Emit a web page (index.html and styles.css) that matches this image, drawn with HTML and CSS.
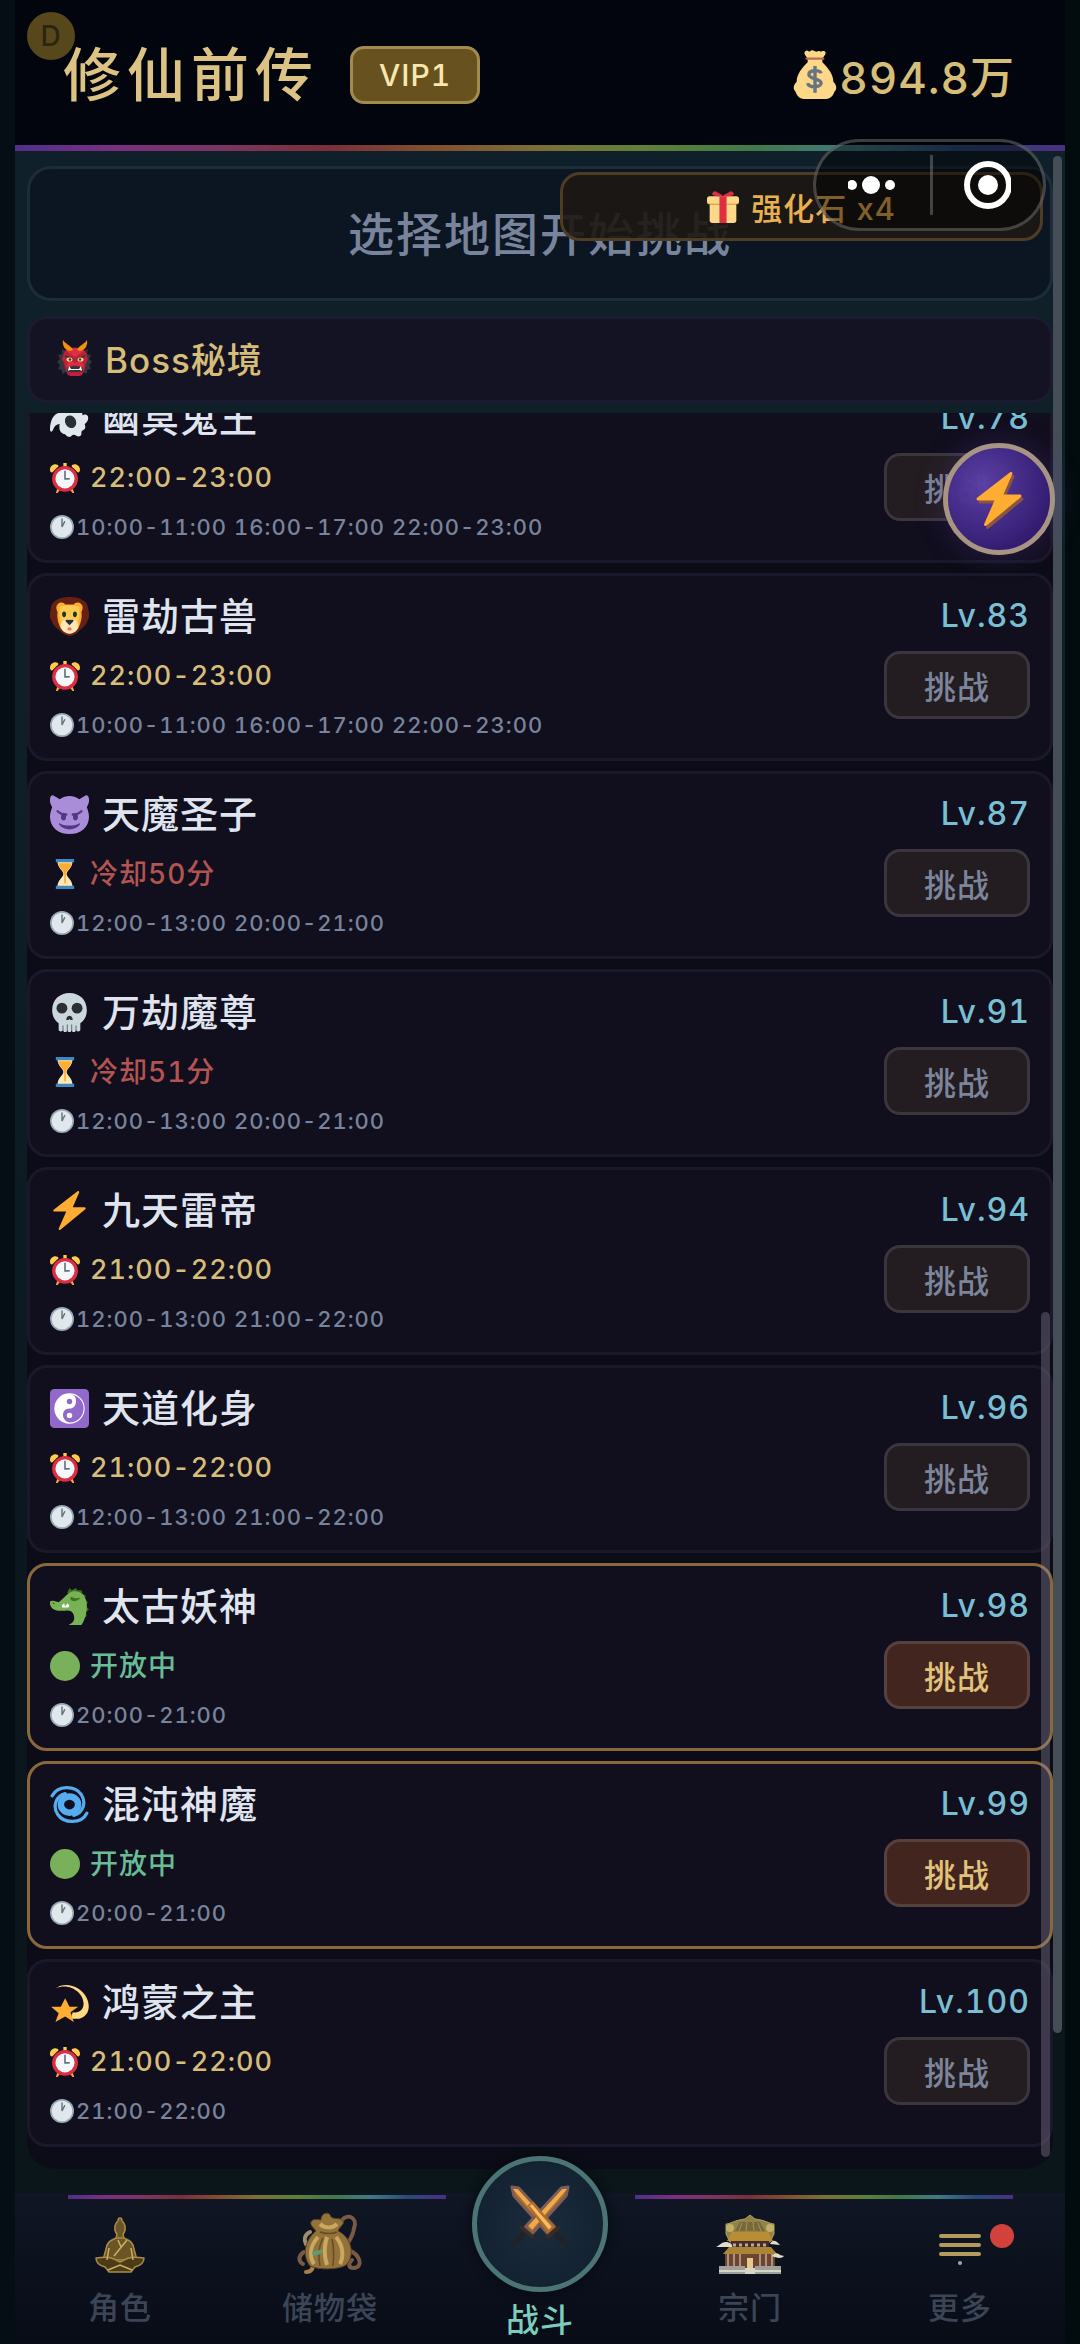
FILE: index.html
```html
<!DOCTYPE html>
<html lang="zh-CN">

<head>
    <meta charset="UTF-8">
    <meta name="viewport" content="width=device-width, initial-scale=1.0">
    <title>修仙前传</title>
    <link rel="stylesheet" href="styles.css">
</head>

<body>
    <!-- 图标 -->
    <svg class="sprite" aria-hidden="true">
        <symbol id="i-oni" viewBox="0 0 36 36">
            <path fill="#31373d" d="M5 9l4 2 2-4 3 3 4-3 4 3 3-3 2 4 4-2-1 5 4 1-2 4 3 3-3 3 2 4-4 1 0 4-4-2H9l-4 2 0-4-4-1 2-4-3-3 3-3-2-4 4-1z" />
            <path fill="#be2038" d="M7 13c2-7 20-7 22 0l2 6-2 4c-1 5-2 9-4 12-3 2-11 2-14 0-2-3-3-7-4-12l-2-4z" />
            <path fill="#dd2e44" d="M9 11c3-4 15-4 18 0l-9 6zM12 20l6 3 6-3 3 7-9-2-9 2z" />
            <path fill="#f4900c" d="M13 11C8 10 5 6 6 0c2 4 8 5 10 10zM23 11c5-1 8-5 7-11-2 4-8 5-10 10z" />
            <path fill="#31373d" d="M8 15l9 4-1 1-8-3zM28 15l-9 4 1 1 8-3z" />
            <ellipse cx="12.500" cy="19.500" rx="3" ry="2" fill="#ffd983" />
            <ellipse cx="23.500" cy="19.500" rx="3" ry="2" fill="#ffd983" />
            <circle cx="13" cy="19.500" r="1.300" fill="#31373d" />
            <circle cx="23" cy="19.500" r="1.300" fill="#31373d" />
            <path fill="#31373d" d="M11 27c4-1 10-1 14 0l1 5H10z" />
            <path fill="#fff" d="M11 31l1-5 2 3h8l2-3 1 5-2-1H13z" />
        </symbol>
        <symbol id="i-ghost" viewBox="0 0 36 36">
            <path fill="#e1e8ed" d="M35 16c-1-2-3-2-5-1C29 6 25 0 18 0S8 5 8 13c-4 1-8 6-8 15 0 3 2 3 3 0 1-3 3-5 6-5-1 4 0 8 3 9 3 0 3 3 6 3 2 0 2-2 4-2s4 3 6 1c2-1 0-4 2-5 3-1 3-3 2-6 2-1 4-4 3-7z" />
            <circle cx="14" cy="10" r="3" fill="#292f33" />
            <circle cx="23" cy="10" r="3" fill="#292f33" />
            <ellipse cx="19" cy="21" rx="5" ry="6" fill="#292f33" transform="rotate(-30 19 21)" />
        </symbol>
        <symbol id="i-lion" viewBox="0 0 36 36">
            <path fill="#662113" d="M18 0c5 0 10 1 12 3 3 1 5 4 5 7 1 4 2 8 0 11-1 4-4 7-7 9-3 4-7 6-10 6s-7-2-10-6c-3-2-6-5-7-9-2-3-1-7 0-11 0-3 2-6 5-7 2-2 7-3 12-3z" />
            <path fill="#ffac33" d="M7 7c2-3 6-2 7 0h8c1-2 5-3 7 0 2 2 1 5 0 7 1 5-1 11-3 15-4 5-12 5-16 0C8 25 6 19 7 14c-1-2-2-5 0-7z" />
            <path fill="#ffcc4d" d="M9 9c3-2 15-2 18 0 1 7 0 13-3 18H12C9 22 8 16 9 9z" />
            <path fill="#ffe8b6" d="M18 20c5 0 9 3 8 8-1 4-5 6-8 6s-7-2-8-6c-1-5 3-8 8-8z" />
            <ellipse cx="13" cy="16" rx="1.800" ry="2.600" fill="#292f33" />
            <ellipse cx="23" cy="16" rx="1.800" ry="2.600" fill="#292f33" />
            <path fill="#292f33" d="M15 21h6c1 0 1 1 0 2l-3 3-3-3c-1-1-1-2 0-2z" />
            <ellipse cx="18" cy="29.500" rx="2" ry="1.500" fill="#e6707c" />
        </symbol>
        <symbol id="i-imp" viewBox="0 0 36 36">
            <path fill="#aa8dd8" d="M35 1c-1-1-2-1-3 0l-5 3C24 2 21 1 18 1s-6 1-9 3L4 1C3 0 2 0 1 1c-2 3-1 7 1 10-1 3-2 6-2 9 0 10 8 16 18 16s18-6 18-16c0-3-1-6-2-9 2-3 3-7 1-10z" />
            <path fill="none" stroke="#553788" stroke-width="2.200" stroke-linecap="round" d="M7 15c2 2 5 3 8 3M29 15c-2 2-5 3-8 3" />
            <ellipse cx="12.500" cy="20" rx="2.300" ry="3.500" fill="#553788" />
            <ellipse cx="23.500" cy="20" rx="2.300" ry="3.500" fill="#553788" />
            <path fill="#553788" d="M9 26c3 3 15 3 18 0 1 0 1 1 0 2-4 5-14 5-18 0-1-1-1-2 0-2z" />
        </symbol>
        <symbol id="i-skull" viewBox="0 0 36 36">
            <path fill="#ccd6dd" d="M34 16C34 6 27 0 18 0S2 6 2 16c0 5 2 9 6 12v6c0 2 4 2 4 0 0 3 4 3 4 0 0 3 4 3 4 0 0 3 4 3 4 0 0 2 4 2 4 0v-6c4-3 6-7 6-12z" />
            <circle cx="11" cy="14" r="5" fill="#292f33" />
            <circle cx="25" cy="14" r="5" fill="#292f33" />
            <path fill="#292f33" d="M18 21c2 0 3 2 3 4h-2l-1-1-1 1h-2c0-2 1-4 3-4z" />
            <path stroke="#66757f" d="M12 30v5M16 29v6M20 29v6M24 30v5" />
        </symbol>
        <symbol id="i-bolt" viewBox="0 0 36 36">
            <path fill="#ffac33" d="M32.900 15.600c-.1-.4-.5-.6-.9-.6H21L26.900 1.400c.4-1-.6-1.800-1.500-1.200l-22 17c-.8.700-.4 1.800.6 1.800h11L8.100 34.600c-.4 1 .6 1.800 1.500 1.200l23-19c.3-.3.500-.8.300-1.200z" />
        </symbol>
        <symbol id="i-yinyang" viewBox="0 0 36 36">
            <rect width="36" height="36" rx="4" fill="#9268ca" />
            <circle cx="18" cy="18" r="14" fill="#fff" />
            <path fill="#9268ca" d="M18 5a13 13 0 0 1 0 26c-4-1-6-4-6-7s2-6 6-6 6-3 6-7-2-6-6-6z" />
            <circle cx="18" cy="11.500" r="2.500" fill="#9268ca" />
            <circle cx="18" cy="24.500" r="2.500" fill="#fff" />
        </symbol>
        <symbol id="i-dragon" viewBox="0 0 36 36">
            <path fill="#3e721d" d="M16 5l2-4 2 2 4-2 1 2 4 0 1 3 3 2-1 3 3 3-2 3 3 4-3 2 1 4-4 2z" />
            <path fill="#77b255" d="M0 16c-1-3 1-4 4-3l4 1c5-3 7-8 13-10 8-1 13 5 13 13 0 7-2 14-5 18H17c5-2 6-5 5-9-1-4-5-5-8-4l-5 0c-5 0-8-2-9-6z" />
            <path fill="#3e721d" d="M19 9c3 1 5 2 9 1-2 3-6 4-9 2zM2 14l3 1-2 1z" />
            <path fill="#fff" d="M11 17l2-2 1 3 2-3 2 2-1 2-6 0z" />
        </symbol>
        <symbol id="i-cyclone" viewBox="0 0 36 36">
            <g fill="none" stroke="#55acee" stroke-linecap="round">
                <path stroke-width="3" d="M2 10C7 0 23 0 29 9c5 8 1 17-7 19" />
                <path stroke-width="3" d="M34 26c-5 10-21 10-27 1C2 19 6 10 14 8" />
                <ellipse cx="18" cy="18" rx="8" ry="7.500" stroke-width="6" />
            </g>
        </symbol>
        <symbol id="i-dizzy" viewBox="0 0 36 36">
            <path fill="#ffd983" d="M5 5C14-2 29 3 34 14c4 9 1 17-7 19l-8 0 2-6c6 1 10-2 10-8C31 9 18-1 5 5z" />
            <path fill="#ffac33" d="M14 14l4 8h8l-7 5 3 9-8-5-9 5 3-8-7-6 9 0z" />
        </symbol>
        <symbol id="i-alarm" viewBox="0 0 36 36">
            <path fill="#ffcc4d" d="M0 8c0-5 5-8 9-6 2 1 1 3-1 4L3 11C1 12 0 10 0 8zM36 8c0-5-5-8-9-6-2 1-1 3 1 4l5 5c2 1 3-1 3-3zM16 0h4v5h-4z" />
            <path fill="#ffac33" d="M9 30l3 2-3 4-2 0zM27 30l-3 2 3 4 2 0z" />
            <circle cx="18" cy="19" r="15.500" fill="#dd2e44" />
            <circle cx="18" cy="19" r="11.500" fill="#f5f8fa" />
            <path fill="none" stroke="#66757f" stroke-width="2" stroke-linecap="round" d="M18 10v9h5" />
        </symbol>
        <symbol id="i-hourglass" viewBox="0 0 36 36">
            <path fill="#ffe8b6" d="M9 3h18c0 8-7 11-7 15s7 7 7 15H9c0-8 7-11 7-15S9 11 9 3z" />
            <path fill="#ffac33" d="M10 5h16c-1 7-7 9-7 13l0 11h-2V18c0-4-6-6-7-13z" />
            <path fill="#3b88c3" d="M7 0h22v4H7zM7 32h22v4H7z" />
        </symbol>
        <symbol id="i-clock" viewBox="0 0 36 36">
            <circle cx="18" cy="18" r="18" fill="#99aab5" />
            <circle cx="18" cy="18" r="15.500" fill="#e1e8ed" />
            <path fill="none" stroke="#66757f" stroke-width="2.200" stroke-linecap="round" d="M18 6v12l4-8" />
        </symbol>
        <symbol id="i-open" viewBox="0 0 36 36">
            <circle cx="18" cy="18" r="18" fill="#78b159" />
        </symbol>
        <symbol id="i-money" viewBox="0 0 36 40">
            <path fill="#fdd888" d="M10 1c2-2 3 1 4 0s2-1 4 0 3-1 4 0 2-1 4 0c2 2-1 4-2 6v3c5 5 9 10 9 16 3 3 3 6 1 8-1 3-3 6-7 6H9c-4 0-6-3-7-6-2-2-2-5 1-8 0-6 4-11 9-16V7c-1-2-4-4-2-6z" />
            <path fill="#bf6952" d="M11 6h14c1 0 1 2 0 2H11c-1 0-1-2 0-2z" />
            <path fill="none" stroke="#67757f" stroke-width="2.800" d="M23 19c-1-3-10-3-10 1s10 3 10 7-10 4-11 0M18 13v22" />
        </symbol>
        <symbol id="i-gift" viewBox="0 0 36 36">
            <path fill="#fdd888" d="M3 15h30v18c0 2-1 3-3 3H6c-2 0-3-1-3-3z" />
            <rect y="7" width="36" height="8" rx="3" fill="#fcab40" />
            <rect y="6" width="36" height="8" rx="3" fill="#fdd888" />
            <path fill="#dd2e44" d="M14 6h8v30h-8z" />
            <path fill="#dd2e44" d="M17 6C13 6 7 6 6 4s3-5 5-3 6 2 7 5zM19 6c4 0 10 0 11-2s-3-5-5-3-6 2-7 5z" />
        </symbol>
        <symbol id="i-monk" viewBox="0 0 64 64">
            <g fill="#6b5425" stroke="#a88c48" stroke-width="1.500" stroke-linejoin="round">
                <path d="M30 9c0-4 4-4 4 0 4 3 4 10 1 13l1 5h-8l1-5c-3-3-3-10 1-13z" />
                <path d="M28 26h8c7 3 9 5 10 11l3 11H15l3-11c1-6 3-8 10-11z" />
                <path fill="#4c3b17" d="M8 46c6-1 13-2 18 1l6 3 6-3c5-3 12-2 18-1 0 6-5 8-9 9l-4 5H21l-4-5c-4-1-9-3-9-9z" />
            </g>
            <path fill="none" stroke="#cdb062" stroke-width="1.500" d="M39 28L26 44M30 28l3 7M21 36l-2 12M43 36l2 12M20 58l12-5 12 5" />
        </symbol>
        <symbol id="i-bag" viewBox="0 0 64 64">
            <g fill="none" stroke="#7b5a45" stroke-width="4" stroke-linecap="round">
                <path d="M44 8c6-7 16-2 12 8-1 10-7 14-8 20" />
                <path d="M50 38c12 4 16 17 6 18-6 0-6-5-2-8" />
                <path stroke="#a08d6c" d="M12 20c-6 3-6 8-4 12" />
                <path d="M6 40c-6 4-6 9-1 12" />
                <path stroke="#a5804a" d="M14 50c3 6-1 10-6 10" />
            </g>
            <path fill="#94733a" stroke="#594226" d="M23 8c0-8 9-9 10-3 4 3 9 0 12 4 2 3-4 6-5 10 13 6 18 24 8 34-8 5-28 5-36 1-9-12-4-27 6-35-3-4-6-6-5-9s6-3 10-2z" />
            <path fill="none" stroke="#c9a860" stroke-width="4" d="M22 12c4 4 12 5 17 0M20 25c-8 9-9 19-4 27M29 25c-3 9-3 19 0 28M38 25c7 8 8 19 4 27" />
            <path fill="none" stroke="#654b28" stroke-width="1.500" d="M22 20c5 2 13 2 17 0M25 26c-5 9-5 18-3 28M34 27c2 9 2 18 1 27" />
            <path fill="#5d9c76" d="M14 40l11-3-2 5-8 2z" />
        </symbol>
        <symbol id="i-temple" viewBox="0 0 68 60">
            <path fill="#948349" stroke="#b3a25d" d="M34 1l5 4c10 1 15 5 19 5l0 10-4 8H14l-4-8V10c4 0 9-4 19-5z" />
            <path fill="#766a3c" d="M24 8h20l5 9H19z" />
            <path stroke="#a39457" d="M26 9l-3 8M31 8l-1 9M37 8l1 9M42 9l3 8" />
            <circle cx="14" cy="14" r="4" fill="#c2b069" />
            <circle cx="54" cy="14" r="4" fill="#c2b069" />
            <path fill="#b98d33" d="M16 18h36l5 9H11z" />
            <path fill="#432d2b" d="M15 27h38v7H15z" />
            <path stroke="#c3a69a" stroke-width="3" stroke-dasharray="3 3" d="M17 31h34" />
            <path fill="#a98534" d="M13 33h42l6 7H7z" />
            <path fill="#6d4434" d="M9 40h50v14H9z" />
            <path stroke="#ad9377" stroke-width="2" d="M12 40v14M18 40v14M24 40v14M44 40v14M50 40v14M56 40v14" />
            <path fill="#e7c98c" d="M31 44h6v10h-6z" />
            <path fill="#9ea19b" d="M3 52h26v8H3zM39 52h26v8H39z" />
            <path fill="#d8d5c2" d="M29 54h10v6H29zM3 56h62v2H3z" />
            <path fill="#e2dccd" d="M0 33c4-2 6-5 10-5s7 3 6 5zM54 30c2-4 5-4 8-1l2 2zM56 42c3-4 6-3 8-1l4 1c-2 3-8 2-12 0z" />
        </symbol>
        <symbol id="i-more" viewBox="0 0 64 64">
            <path stroke="#b39a5d" stroke-width="4" stroke-linecap="round" d="M13 24h38M13 33h38M13 42h38" />
            <circle cx="32" cy="51" r="2" fill="#aaa69a" />
        </symbol>
        <symbol id="i-swords" viewBox="0 0 64 66">
            <g id="blade">
                <path stroke="#7d5d58" stroke-width="3" stroke-linejoin="round" fill="#b06c2b" d="M3 2l7 1 37 40-7 7L5 11z" />
                <path fill="#f0aa4a" d="M4 4l5 0 35 38-4 4z" />
                <path stroke="#202225" stroke-width="5" stroke-linecap="round" d="M49 51l11 11" />
                <path stroke="#3a2a20" stroke-width="4" stroke-linecap="round" d="M40 53l11-9" />
            </g>
            <use href="#blade" transform="matrix(-1 0 0 1 64 0)" />
            <path fill="#b06c2b" d="M19 21l6-4 22 26-7 7z" />
            <path fill="#f7bc62" d="M21 21l3-1 20 23-3 3z" />
        </symbol>
    </svg>

    <div class="app">
        <header class="header">
            <span class="debug-badge">D</span>
            <h1>修仙前传</h1>
            <span class="vip">VIP1</span>
            <div class="money"><svg><use href="#i-money" /></svg>894.8万</div>
        </header>

        <main class="main">
            <div class="map-panel">选择地图开始挑战</div>
            <h2 class="section-title"><svg><use href="#i-oni" /></svg>Boss秘境</h2>
            <div class="boss-list" id="boss-list"></div>
            <div class="scrollbar scrollbar-page"></div>
            <div class="scrollbar scrollbar-list"></div>
        </main>

        <nav class="nav">
            <a href="#role"><svg><use href="#i-monk" /></svg>角色</a>
            <a href="#bag"><svg><use href="#i-bag" /></svg>储物袋</a>
            <a href="#battle" class="active"><span class="nav-circle"><svg><use href="#i-swords" /></svg></span>战斗</a>
            <a href="#sect"><svg><use href="#i-temple" /></svg>宗门</a>
            <a href="#more"><svg><use href="#i-more" /></svg>更多<i class="dot"></i></a>
        </nav>

        <div class="toast"><svg><use href="#i-gift" /></svg>强化石 x4</div>
        <button type="button" class="fab" aria-label="快速战斗"><svg><use href="#i-bolt" /></svg></button>
        <div class="capsule">
            <button type="button" aria-label="菜单">
                <svg viewBox="0 0 50 50"><circle cx="4" cy="25" r="5" /><circle cx="23" cy="25" r="9" /><circle cx="42" cy="25" r="5" /></svg>
            </button>
            <button type="button" aria-label="关闭">
                <svg viewBox="0 0 50 50"><circle class="ring" cx="27" cy="25" r="21" /><circle cx="27" cy="25" r="10" /></svg>
            </button>
        </div>
    </div>

    <script>
        const bosses = [
            { icon: 'ghost', name: '幽冥鬼王', lv: 78, state: 'wait', status: '22:00-23:00', times: '10:00-11:00 16:00-17:00 22:00-23:00' },
            { icon: 'lion', name: '雷劫古兽', lv: 83, state: 'wait', status: '22:00-23:00', times: '10:00-11:00 16:00-17:00 22:00-23:00' },
            { icon: 'imp', name: '天魔圣子', lv: 87, state: 'cooling', status: '冷却50分', times: '12:00-13:00 20:00-21:00' },
            { icon: 'skull', name: '万劫魔尊', lv: 91, state: 'cooling', status: '冷却51分', times: '12:00-13:00 20:00-21:00' },
            { icon: 'bolt', name: '九天雷帝', lv: 94, state: 'wait', status: '21:00-22:00', times: '12:00-13:00 21:00-22:00' },
            { icon: 'yinyang', name: '天道化身', lv: 96, state: 'wait', status: '21:00-22:00', times: '12:00-13:00 21:00-22:00' },
            { icon: 'dragon', name: '太古妖神', lv: 98, state: 'open', status: '开放中', times: '20:00-21:00' },
            { icon: 'cyclone', name: '混沌神魔', lv: 99, state: 'open', status: '开放中', times: '20:00-21:00' },
            { icon: 'dizzy', name: '鸿蒙之主', lv: 100, state: 'wait', status: '21:00-22:00', times: '21:00-22:00' }
        ];
        const stateIcons = { wait: 'alarm', cooling: 'hourglass', open: 'open' };

        document.getElementById('boss-list').innerHTML = bosses.map(b =>
            '<article class="boss ' + b.state + '">' +
            '<div class="info">' +
            '<h3><svg><use href="#i-' + b.icon + '"/></svg>' + b.name + '</h3>' +
            '<p class="status"><svg><use href="#i-' + stateIcons[b.state] + '"/></svg>' + b.status + '</p>' +
            '<p class="times"><svg><use href="#i-clock"/></svg>' + b.times + '</p>' +
            '</div>' +
            '<div class="side"><span class="level">Lv.' + b.lv + '</span>' +
            '<button type="button"' + (b.state === 'open' ? '' : ' disabled') + '>挑战</button></div>' +
            '</article>'
        ).join('');
    </script>
</body>

</html>
```
FILE: styles.css
```css
:root {
    --gold: #d6bd78;
    --muted: #78849c;
    --rainbow: linear-gradient(90deg, #50308a, #7a2f80, #7a3560, #7a3038, #80502f, #7a7035, #5f8038, #3f7a48, #3f7a80, #2a4a7a, #4a2f80);
}

* {
    box-sizing: border-box;
}

body {
    margin: 0;
    background: linear-gradient(90deg, #050e15, #020c0e);
    color: #dfe4ee;
    font-family: Inter, "Noto Sans CJK SC", sans-serif;
    font-weight: 500;
    font-variant-numeric: tabular-nums;
    letter-spacing: 1px;
}

h1,
h2,
h3,
p {
    margin: 0;
    font-weight: 500;
}

button {
    font: inherit;
    letter-spacing: inherit;
    padding: 0;
}

.sprite {
    position: absolute;
    width: 0;
    height: 0;
}

.app {
    position: relative;
    display: flex;
    flex-direction: column;
    height: 100vh;
    margin: 0 15px;
}

/* header */
.header {
    position: relative;
    display: flex;
    align-items: center;
    height: 151px;
    padding: 4px 50px 0 48px;
    background: #02050d;
    border-bottom: 6px solid;
    border-image: var(--rainbow) 1;
    flex-shrink: 0;
}

.debug-badge {
    position: absolute;
    left: 12px;
    top: 12px;
    width: 48px;
    height: 48px;
    border-radius: 50%;
    background: #57481c;
    color: #2b2510;
    font-size: 28px;
    line-height: 48px;
    text-align: center;
}

.header h1 {
    position: relative;
    color: #dcc384;
    font-size: 58px;
    letter-spacing: 6px;
    line-height: 1;
}

.vip {
    margin-left: 31px;
    padding: 0 26px;
    border: 3px solid #a18b4d;
    border-radius: 14px;
    background: #67521f;
    color: #f8e7ae;
    font-size: 30px;
    line-height: 52px;
}

.money {
    display: flex;
    align-items: center;
    gap: 2px;
    margin-left: auto;
    color: var(--gold);
    font-size: 44px;
}

.money svg {
    width: 44px;
    height: 49px;
}

/* main */
.main {
    position: relative;
    display: flex;
    flex-direction: column;
    flex: 1;
    min-height: 0;
    padding: 15px 12px 24px;
    background: linear-gradient(#10202a, #0e1f27 30%, #0b171e 70%, #0a1619);
}

.map-panel {
    margin-bottom: 15px;
    padding-top: 2px;
    border: 3px solid #1c2c38;
    border-radius: 24px;
    background: #0c1622;
    color: var(--muted);
    font-size: 46px;
    letter-spacing: 2px;
    line-height: 127px;
    text-align: center;
}

.section-title {
    display: flex;
    align-items: center;
    gap: 12px;
    height: 87px;
    margin-bottom: 10px;
    padding: 0 27px 4px;
    border: 3px solid #1c1b31;
    border-radius: 20px;
    background: #131323;
    color: var(--gold);
    font-size: 35px;
}

.section-title svg {
    width: 36px;
    height: 36px;
}

.boss-list {
    display: flex;
    flex: 1;
    flex-direction: column;
    justify-content: flex-end;
    gap: 10px;
    min-height: 0;
    overflow: hidden;
    padding-bottom: 22px;
    border-radius: 0 0 28px 28px;
    background: #0b0c17;
}

.boss {
    display: flex;
    justify-content: space-between;
    flex-shrink: 0;
    padding: 17px 20px 21px;
    border: 3px solid #1a182a;
    border-radius: 20px;
    background: #110e1e;
}

.boss.open {
    border-color: #89693c;
}

.info {
    display: flex;
    flex-direction: column;
    gap: 16px;
}

.info h3,
.status,
.times {
    display: flex;
    align-items: center;
}

.info h3 {
    gap: 13px;
    font-size: 38px;
    line-height: 46px;
}

.info h3 svg {
    width: 39px;
    height: 39px;
}

.status {
    gap: 10px;
    color: var(--gold);
    font-size: 27px;
    line-height: 42px;
}

.status svg {
    width: 30px;
    height: 30px;
}

.cooling .status,
.open .status {
    font-size: 28px;
}

.cooling .status {
    color: #b25450;
}

.open .status {
    color: #68bd94;
}

.times {
    gap: 2px;
    color: var(--muted);
    font-size: 22px;
    line-height: 24px;
}

.times svg {
    width: 24px;
    height: 24px;
}

.side {
    display: flex;
    flex-direction: column;
    align-items: flex-end;
    gap: 12px;
}

.level {
    color: #79bfd3;
    font-size: 32px;
    line-height: 46px;
}

.side button {
    width: 146px;
    height: 68px;
    border: 3px solid #3b363e;
    border-radius: 16px;
    background: #231d21;
    color: #7c859c;
    font-size: 32px;
}

.open .side button {
    border-color: #57413f;
    background: #432520;
    color: #e0c27a;
}

.scrollbar {
    position: absolute;
    width: 9px;
    border-radius: 5px;
}

.scrollbar-page {
    top: 5px;
    right: 3px;
    bottom: 160px;
    background: #454e57;
}

.scrollbar-list {
    right: 15px;
    bottom: 36px;
    height: 845px;
    background: rgba(150, 140, 160, 0.35);
}

/* bottom nav */
.nav {
    position: relative;
    display: grid;
    grid-template-columns: repeat(5, 1fr);
    align-items: start;
    height: 151px;
    background: linear-gradient(#101624, #080c17);
    flex-shrink: 0;
}

.nav::before,
.nav::after {
    content: "";
    position: absolute;
    top: 2px;
    left: 5%;
    width: 36%;
    height: 4px;
    background: var(--rainbow);
}

.nav::after {
    left: auto;
    right: 5%;
}

.nav a {
    position: relative;
    display: flex;
    flex-direction: column;
    align-items: center;
    gap: 10px;
    padding-top: 19px;
    color: #3b4556;
    font-size: 31px;
    line-height: 44px;
    text-decoration: none;
}

.nav svg {
    width: 68px;
    height: 64px;
}

.nav .active {
    gap: 6px;
    margin-top: -37px;
    padding: 0;
    color: #7dcdbd;
    font-size: 33px;
    z-index: 1;
}

.nav-circle {
    display: flex;
    justify-content: center;
    width: 136px;
    height: 136px;
    padding-top: 24px;
    border: 5px solid #4b7475;
    border-radius: 50%;
    background: radial-gradient(#1c2c3d, #101e2d);
    box-shadow: 0 0 12px #05080f;
}

.dot {
    position: absolute;
    top: 31px;
    right: 51px;
    width: 24px;
    height: 24px;
    border-radius: 50%;
    background: #d2423c;
}

/* floating items */
.toast {
    position: absolute;
    top: 172px;
    right: 22px;
    display: flex;
    align-items: center;
    justify-content: center;
    gap: 12px;
    width: 46%;
    height: 69px;
    border: 3px solid #4e3d24;
    border-radius: 20px;
    background: rgba(28, 23, 19, 0.9);
    color: #e9b04e;
    font-size: 31px;
}

.toast svg {
    width: 32px;
    height: 32px;
}

.fab {
    position: absolute;
    top: 443px;
    right: 10px;
    display: flex;
    align-items: center;
    justify-content: center;
    width: 112px;
    height: 112px;
    border: 5px solid #a89483;
    border-radius: 50%;
    background: radial-gradient(circle at 35% 35%, rgba(92, 64, 168, 0.97), #331b70 75%);
    box-shadow: 0 0 30px rgba(90, 60, 160, 0.3);
}

.fab svg {
    width: 54px;
    height: 54px;
    filter: drop-shadow(2px 3px 0 #8a5540);
}

.capsule {
    position: absolute;
    top: 139px;
    right: 19px;
    display: grid;
    grid-template-columns: 1fr 1fr;
    width: 233px;
    height: 92px;
    border: 3px solid rgba(150, 150, 150, 0.4);
    border-radius: 46px;
    background: rgba(0, 0, 0, 0.45);
}

.capsule button {
    display: flex;
    align-items: center;
    justify-content: center;
    border: none;
    background: none;
}

.capsule button + button::before {
    content: "";
    position: absolute;
    left: 50%;
    width: 3px;
    height: 60px;
    background: rgba(150, 150, 150, 0.4);
}

.capsule svg {
    width: 50px;
    height: 50px;
    fill: #fff;
}

.capsule .ring {
    fill: none;
    stroke: #fff;
    stroke-width: 6;
}
```
